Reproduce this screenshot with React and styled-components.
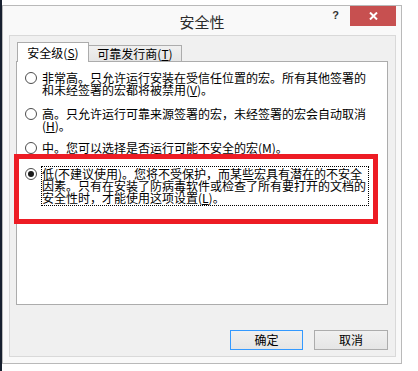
import React from 'react' ;
import styled, { createGlobalStyle } from 'styled-components' ;

const GlobalStyle = createGlobalStyle`
    body {
        margin : 0 ;
        background : #fff ;
    }
`;

const Screen = styled.div`
    width : 418px ;
    height : 371px ;
    position : relative ;
    overflow : hidden ;
    display : flex ;
    background : #fff ;
    font-family : "Noto Sans CJK SC", "Liberation Sans", sans-serif ;
    color : #000 ;
`;

// 뒤쪽 창의 가장자리
const BackEdge = styled.div`
    width : 2px ;
    height : 100% ;
    background : #17202f ;
`;

const Window = styled.div`
    box-sizing : border-box ;
    width : 400px ;
    height : 359px ;
    margin-top : 5px ;
    border : 1px solid #b9b9b9 ;
    background : #f9f9f9 ;
    display : flex ;
    flex-direction : column ;
`;

const TitleBar = styled.div`
    height : 29px ;
    display : grid ;
    grid-template-columns : 1fr auto 1fr ;
`;

const Title = styled.div`
    font-size : 15px ;
    line-height : 15px ;
    padding-top : 8px ;
    color : #2b2b2b ;
    text-align : center ;
`;

const Controls = styled.div`
    display : flex ;
    justify-content : flex-end ;
    align-items : flex-start ;
    padding-right : 5px ;
`;

const HelpButton = styled.div`
    font-family : "Liberation Sans", sans-serif ;
    font-weight : bold ;
    font-size : 11px ;
    line-height : 11px ;
    color : #333 ;
    padding-top : 4px ;
    margin-right : 11px ;
`;

const CloseButton = styled.div`
    width : 46px ;
    height : 20px ;
    background : #c75050 ;
    display : flex ;
    align-items : center ;
    justify-content : center ;
`;

const Body = styled.div`
    flex : 1 ;
    margin : 0 5px 6px 6px ;
    border : 1px solid #d9d9d9 ;
    background : #f0f0f0 ;
    padding : 6px 7px 5px 6px ;
    display : flex ;
    flex-direction : column ;
`;

const TabRow = styled.div`
    height : 20px ;
    display : flex ;
    align-items : flex-end ;
    padding-left : 1px ;
    margin-bottom : -1px ;
    position : relative ;
    z-index : 1 ;
`;

const Tab = styled.div`
    box-sizing : border-box ;
    width : ${p => p.$width}px ;
    height : ${p => p.$active ? 20 : 16}px ;
    margin-bottom : ${p => p.$active ? 0 : 1}px ;
    border : 1px solid #acacac ;
    border-bottom : none ;
    border-left-width : ${p => p.$active ? 1 : 0}px ;
    background : ${p => p.$active ? '#fff' : 'linear-gradient(#f0f0f0, #e5e5e5)'} ;
    font-size : 12px ;
    line-height : 14px ;
    padding-top : ${p => p.$active ? 3 : 1}px ;
    text-align : center ;
    white-space : nowrap ;
`;

const Pane = styled.div`
    box-sizing : border-box ;
    height : 244px ;
    border : 1px solid #acacac ;
    background : #fff ;
    padding : 10px 0 0 8px ;
    display : flex ;
    flex-direction : column ;
`;

const Option = styled.div`
    display : flex ;
    align-items : flex-start ;
    gap : 5px ;
    margin-top : ${p => p.$gap}px ;
`;

const Radio = styled.div`
    box-sizing : border-box ;
    flex : none ;
    width : 12px ;
    height : 12px ;
    margin-top : ${p => p.$focused ? 2 : 0}px ;
    border-radius : 50% ;
    border : 1px solid #4d4d4d ;
    background : #fff ;
    display : flex ;
    align-items : center ;
    justify-content : center ;

    &::after {
        content : '' ;
        width : 6px ;
        height : 6px ;
        border-radius : 50% ;
        background : ${p => p.$checked ? '#1a1a1a' : 'transparent'} ;
    }
`;

const Label = styled.div`
    border : 1px dotted ${p => p.$focused ? '#000' : 'transparent'} ;
    padding : ${p => p.$focused ? '1px 2px 1px 0' : '0'} ;
    margin : ${p => p.$focused ? '0 0 0 -1px' : '-1px 0 0 -1px'} ;
`;

const Line = styled.div`
    height : 12px ;
    font-size : 12px ;
    line-height : 12px ;
    white-space : nowrap ;
`;

const ButtonRow = styled.div`
    margin-top : 25px ;
    display : flex ;
    justify-content : flex-end ;
    gap : 11px ;
`;

const Button = styled.div`
    box-sizing : border-box ;
    width : ${p => p.$width}px ;
    height : 20px ;
    border : 1px solid ${p => p.$default ? '#3399ff' : '#acacac'} ;
    background : linear-gradient(#f0f0f0, #e5e5e5) ;
    font-size : 12px ;
    line-height : 18px ;
    text-align : center ;
`;

// 강조 표시 (빨간 상자)
const Highlight = styled.div`
    position : absolute ;
    left : 14px ;
    top : 154px ;
    width : 364px ;
    height : 70px ;
    box-sizing : border-box ;
    border : 5px solid #ed1c24 ;
    pointer-events : none ;
`;

// 마지막 줄은 [앞, 밑줄 글자, 뒤]
const options = [
    {
        lines : ['非常高。只允许运行安装在受信任位置的宏。所有其他签署的'],
        last : ['和未经签署的宏都将被禁用(', 'V', ')。'],
        gap : 0,
    },
    {
        lines : ['高。只允许运行可靠来源签署的宏，未经签署的宏会自动取消'],
        last : ['(', 'H', ')。'],
        gap : 11,
    },
    {
        lines : [],
        last : ['中。您可以选择是否运行可能不安全的宏(', 'M', ')。'],
        gap : 9,
    },
    {
        lines : ['低(不建议使用)。您将不受保护，而某些宏具有潜在的不安全', '因素。只有在安装了防病毒软件或检查了所有要打开的文档的'],
        last : ['安全性时，才能使用这项设置(', 'L', ')。'],
        checked : true,
        gap : 11,
    },
] ;

const App = () => {
    return (
        <Screen>
            <GlobalStyle />
            <BackEdge />
            <Window>
                <TitleBar>
                    <div />
                    <Title>安全性</Title>
                    <Controls>
                        <HelpButton>?</HelpButton>
                        <CloseButton>
                            <svg width="9" height="8" viewBox="0 0 9 8">
                                <path d="M1 0.5 L8 7.5 M8 0.5 L1 7.5" stroke="#fff" strokeWidth="2" />
                            </svg>
                        </CloseButton>
                    </Controls>
                </TitleBar>
                <Body>
                    <TabRow>
                        <Tab $active $width={72}>安全级(<u>S</u>)</Tab>
                        <Tab $width={93}>可靠发行商(<u>T</u>)</Tab>
                    </TabRow>
                    <Pane>
                        {options.map((opt, index) => (
                            <Option key={index} $gap={opt.gap}>
                                <Radio $checked={opt.checked} $focused={opt.checked} />
                                <Label $focused={opt.checked}>
                                    {opt.lines.map((line, i) => <Line key={i}>{line}</Line>)}
                                    <Line>{opt.last[0]}<u>{opt.last[1]}</u>{opt.last[2]}</Line>
                                </Label>
                            </Option>
                        ))}
                    </Pane>
                    <ButtonRow>
                        <Button $default $width={73}>确定</Button>
                        <Button $width={74}>取消</Button>
                    </ButtonRow>
                </Body>
            </Window>
            <Highlight />
        </Screen>
    ) ;
} ;

export default App ;
